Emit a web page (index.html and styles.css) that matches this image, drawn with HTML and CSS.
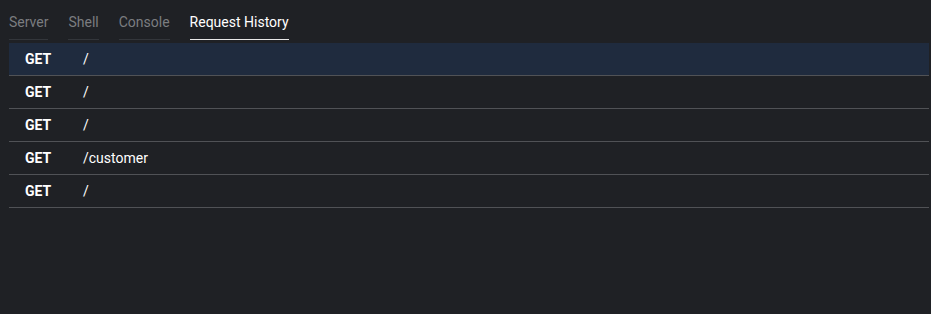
FILE: index.html
```html
<!DOCTYPE html>
<html>
<head>
<meta charset="utf-8">
<link rel="stylesheet" href="styles.css">
</head>
<body>
<div class="panel">
  <nav class="tabs">
    <span class="tab">Server</span>
    <span class="tab">Shell</span>
    <span class="tab">Console</span>
    <span class="tab active">Request History</span>
  </nav>
  <div class="list">
    <div class="row selected"><span class="method">GET</span><span class="path">/</span></div>
    <div class="row"><span class="method">GET</span><span class="path">/</span></div>
    <div class="row"><span class="method">GET</span><span class="path">/</span></div>
    <div class="row"><span class="method">GET</span><span class="path">/customer</span></div>
    <div class="row"><span class="method">GET</span><span class="path">/</span></div>
  </div>
</div>
</body>
</html>
```
FILE: styles.css
```css
html, body {
  margin: 0;
  padding: 0;
  background: #1f2125;
  height: 100%;
}
body {
  font-family: Roboto, "Liberation Sans", sans-serif;
  color: #ffffff;
}
.panel {
  padding: 0 2px 0 9px;
}
.tabs {
  display: flex;
  gap: 20px;
  margin-bottom: 3px;
}
.tab {
  font-size: 14px;
  line-height: 20px;
  padding: 12px 0 7px;
  color: #7b7d80;
  border-bottom: 1px solid #33363b;
}
.tab.active {
  color: #ffffff;
  border-bottom-color: #e8e8e8;
}
.row {
  display: flex;
  align-items: center;
  height: 32px;
  border-bottom: 1px solid #505256;
}
.row.selected {
  background: #1f2b3e;
}
.method {
  width: 58px;
  padding-left: 16px;
  font-size: 14px;
  font-weight: 700;
}
.path {
  font-size: 14px;
}
```
